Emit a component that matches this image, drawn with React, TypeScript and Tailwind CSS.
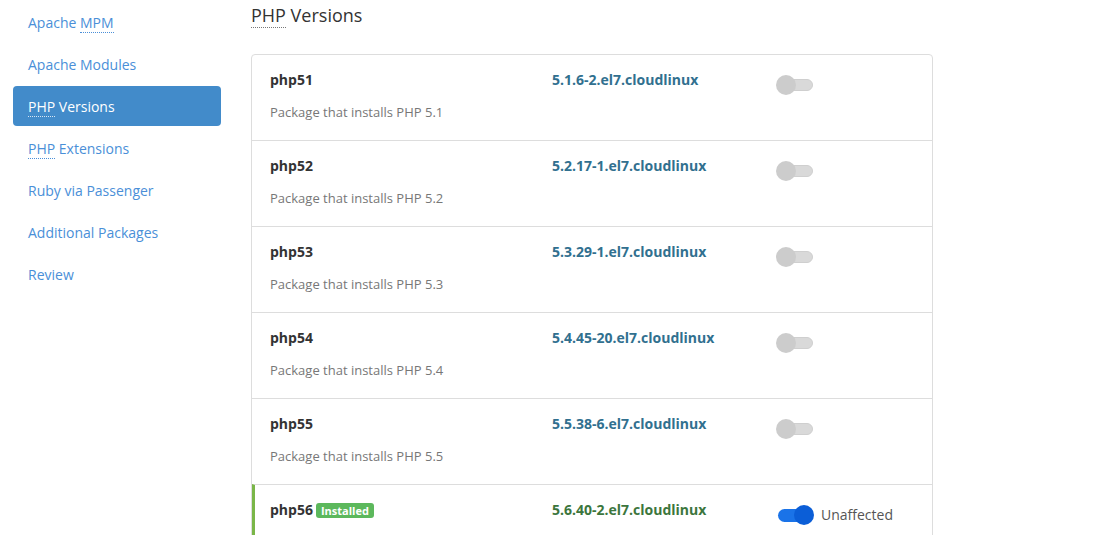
import React from "react";

const navItems = [
    { label: "MPM", prefix: "Apache ", abbr: true },
    { label: "Apache Modules" },
    { label: "PHP", suffix: " Versions", abbr: true, active: true },
    { label: "PHP", suffix: " Extensions", abbr: true },
    { label: "Ruby via Passenger" },
    { label: "Additional Packages" },
    { label: "Review" },
];

const packages = [
    { name: "php51", version: "5.1.6-2.el7.cloudlinux", desc: "Package that installs PHP 5.1" },
    { name: "php52", version: "5.2.17-1.el7.cloudlinux", desc: "Package that installs PHP 5.2" },
    { name: "php53", version: "5.3.29-1.el7.cloudlinux", desc: "Package that installs PHP 5.3" },
    { name: "php54", version: "5.4.45-20.el7.cloudlinux", desc: "Package that installs PHP 5.4" },
    { name: "php55", version: "5.5.38-6.el7.cloudlinux", desc: "Package that installs PHP 5.5" },
    { name: "php56", version: "5.6.40-2.el7.cloudlinux", desc: "Package that installs PHP 5.6", installed: true },
];

const Toggle = ({ on }: { on?: boolean }) =>
    on ? (
        <div className="relative w-[38px] h-[20px]">
            <div className="absolute left-[2px] top-[4px] w-[30px] h-[13px] rounded-full bg-[#1a73e8]" />
            <div className="absolute right-0 top-0 w-[20px] h-[20px] rounded-full bg-[#0b5ed7]" />
        </div>
    ) : (
        <div className="relative w-[38px] h-[20px]">
            <div className="absolute left-[8px] top-[4px] w-[29px] h-[12px] rounded-full bg-[#d9d9d9] border border-[#cfcfcf]" />
            <div className="absolute left-0 top-0 w-[20px] h-[20px] rounded-full bg-[#cccccc]" />
        </div>
    );

export default function App() {
    return (
        <div className="flex bg-white min-h-[535px] text-[#333] [font-family:'Open_Sans',sans-serif]">
            {/* Sidebar */}
            <ul className="ml-[13px] mt-[2px] w-[208px] flex flex-col gap-[2px]">
                {navItems.map((item, i) => (
                    <li
                        key={i}
                        className={
                            item.active
                                ? "h-[40px] px-[15px] flex items-center rounded-[4px] bg-[#428bca] text-white text-[14px]"
                                : "h-[40px] px-[15px] flex items-center text-[#4a8fd8] text-[14px]"
                        }
                    >
                        <span className="whitespace-pre">
                            {item.prefix}
                            {item.abbr ? (
                                <>
                                    <abbr className={"border-b border-dotted " + (item.active ? "border-[#d8e6f3]" : "border-[#4a8fd8]")} style={{ textDecoration: "none" }}>
                                        {item.label}
                                    </abbr>
                                    {item.suffix}
                                </>
                            ) : (
                                item.label
                            )}
                        </span>
                    </li>
                ))}
            </ul>

            {/* Main */}
            <main className="ml-[30px] w-[682px]">
                <h3 className="text-[18px] leading-[20px] mt-[5px] text-[#333]">
                    <abbr className="border-b border-dotted border-[#777]" style={{ textDecoration: "none" }}>PHP</abbr> Versions
                </h3>

                <div className="mt-[29px] border border-[#ddd] rounded-[4px] overflow-hidden">
                    {packages.map((p, i) => (
                        <div
                            key={p.name}
                            className={
                                "grid grid-cols-[282px_224px_1fr] pr-[18px] " +
                                (i > 0 ? "h-[86px] border-t border-[#ddd] " : "h-[85px] ") +
                                (p.installed ? "border-l-[3px] border-l-[#7ab648] pl-[15px]" : "pl-[18px]")
                            }
                        >
                            <div className="pt-[15px]">
                                <div className="flex items-center gap-[3px] text-[14px] font-bold leading-[20px] text-[#333]">
                                    {p.name}
                                    {p.installed && (
                                        <span className="bg-[#5cb85c] text-white text-[11px] font-bold leading-[15px] px-[5px] rounded-[3px]">
                                            Installed
                                        </span>
                                    )}
                                </div>
                                <div className="mt-[12px] text-[13px] leading-[20px] text-[#777]">{p.desc}</div>
                            </div>
                            <div className={"pt-[15px] text-[14px] font-bold leading-[20px] " + (p.installed ? "text-[#3c763d]" : "text-[#31708f]")}>
                                {p.version}
                            </div>
                            <div className="pt-[20px] flex items-start gap-[7px]">
                                <Toggle on={p.installed} />
                                {p.installed && <span className="text-[14px] leading-[20px] text-[#555]">Unaffected</span>}
                            </div>
                        </div>
                    ))}
                </div>
            </main>
        </div>
    );
}
